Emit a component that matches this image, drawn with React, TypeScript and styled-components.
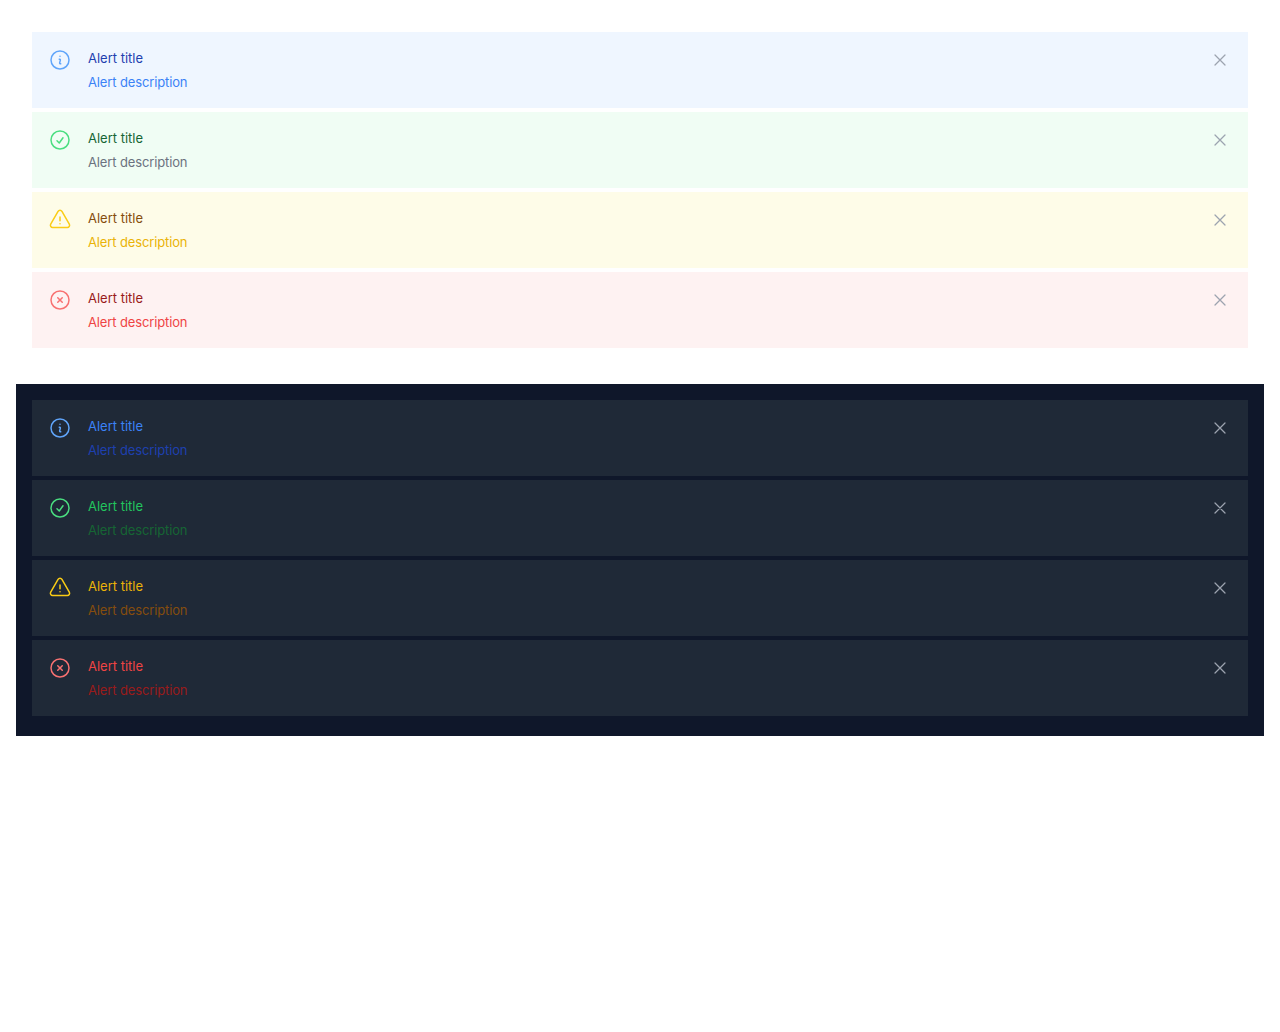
import React from 'react';
import styled, { createGlobalStyle } from 'styled-components';

const GlobalStyle = createGlobalStyle`
  *, *::before, *::after { box-sizing: border-box; }
  body {
    margin: 0;
    background: #fff;
    font-family: Inter, "Liberation Sans", Arial, sans-serif;
  }
`;

const Page = styled.main`
  padding: 16px;
`;

const Panel = styled.section<{ $dark?: boolean }>`
  display: flex;
  flex-direction: column;
  gap: 4px;
  padding: 16px 16px 20px;
  background: ${(p) => (p.$dark ? '#0f172a' : 'transparent')};
  & + & { margin-top: 16px; }
`;

const AlertBox = styled.div<{ $bg: string }>`
  display: flex;
  align-items: flex-start;
  gap: 16px;
  height: 76px;
  padding: 16px;
  background: ${(p) => p.$bg};
`;

const Icon = styled.svg<{ $color: string; $size: number }>`
  flex: none;
  width: ${(p) => p.$size}px;
  height: ${(p) => p.$size}px;
  fill: none;
  stroke: ${(p) => p.$color};
  stroke-width: 1.5;
  stroke-linecap: round;
  stroke-linejoin: round;
`;

const Content = styled.div`
  flex: 1;
  display: flex;
  flex-direction: column;
  gap: 4px;
`;

const Title = styled.div<{ $color: string }>`
  height: 20px;
  font-size: 13px;
  font-weight: 400;
  line-height: 21px;
  color: ${(p) => p.$color};
`;

const Description = styled(Title)`
  letter-spacing: -0.13px;
`;

const CloseButton = styled.button`
  display: flex;
  padding: 2px;
  border: 0;
  background: none;
  cursor: pointer;
`;

const circle = 'M21 12a9 9 0 1 1-18 0 9 9 0 0 1 18 0Z';

const icons = {
  info: `m11.25 11.25.041-.02a.75.75 0 0 1 1.063.852l-.708 2.836a.75.75 0 0 0 1.063.853l.041-.021M12 8.25h.008v.008H12V8.25Z${circle}`,
  success: `M9 12.75 11.25 15 15 9.75${circle}`,
  warning:
    'M12 9v3.75m-9.303 3.376c-.866 1.5.217 3.374 1.948 3.374h14.71c1.73 0 2.813-1.874 1.948-3.374L13.949 3.378c-.866-1.5-3.032-1.5-3.898 0L2.697 16.126ZM12 15.75h.007v.008H12v-.008Z',
  error: `m9.75 9.75 4.5 4.5m0-4.5-4.5 4.5${circle}`,
};

type Kind = keyof typeof icons;

interface AlertStyle {
  kind: Kind;
  bg: string;
  icon: string;
  title: string;
  text: string;
}

const lightAlerts: AlertStyle[] = [
  { kind: 'info', bg: '#eff6ff', icon: '#60a5fa', title: '#1e40af', text: '#3b82f6' },
  { kind: 'success', bg: '#f0fdf4', icon: '#4ade80', title: '#166534', text: '#6b7280' },
  { kind: 'warning', bg: '#fefce8', icon: '#facc15', title: '#854d0e', text: '#eab308' },
  { kind: 'error', bg: '#fef2f2', icon: '#f87171', title: '#991b1b', text: '#ef4444' },
];

const darkAlerts: AlertStyle[] = [
  { kind: 'info', bg: '#1f2937', icon: '#60a5fa', title: '#3b82f6', text: '#1e40af' },
  { kind: 'success', bg: '#1f2937', icon: '#4ade80', title: '#22c55e', text: '#166534' },
  { kind: 'warning', bg: '#1f2937', icon: '#facc15', title: '#eab308', text: '#854d0e' },
  { kind: 'error', bg: '#1f2937', icon: '#f87171', title: '#ef4444', text: '#991b1b' },
];

function Alert({ kind, bg, icon, title, text }: AlertStyle) {
  return (
    <AlertBox $bg={bg} role="alert">
      <Icon $color={icon} $size={24} viewBox="0 0 24 24" aria-hidden="true">
        <path d={icons[kind]} />
      </Icon>
      <Content>
        <Title $color={title}>Alert title</Title>
        <Description $color={text}>Alert description</Description>
      </Content>
      <CloseButton type="button" aria-label="Close">
        <Icon $color="#9ca3af" $size={20} viewBox="0 0 24 24" aria-hidden="true">
          <path d="M6 18 18 6M6 6l12 12" />
        </Icon>
      </CloseButton>
    </AlertBox>
  );
}

export default function App() {
  return (
    <Page>
      <GlobalStyle />
      <Panel>
        {lightAlerts.map((a) => <Alert key={a.kind} {...a} />)}
      </Panel>
      <Panel $dark>
        {darkAlerts.map((a) => <Alert key={a.kind} {...a} />)}
      </Panel>
    </Page>
  );
}
